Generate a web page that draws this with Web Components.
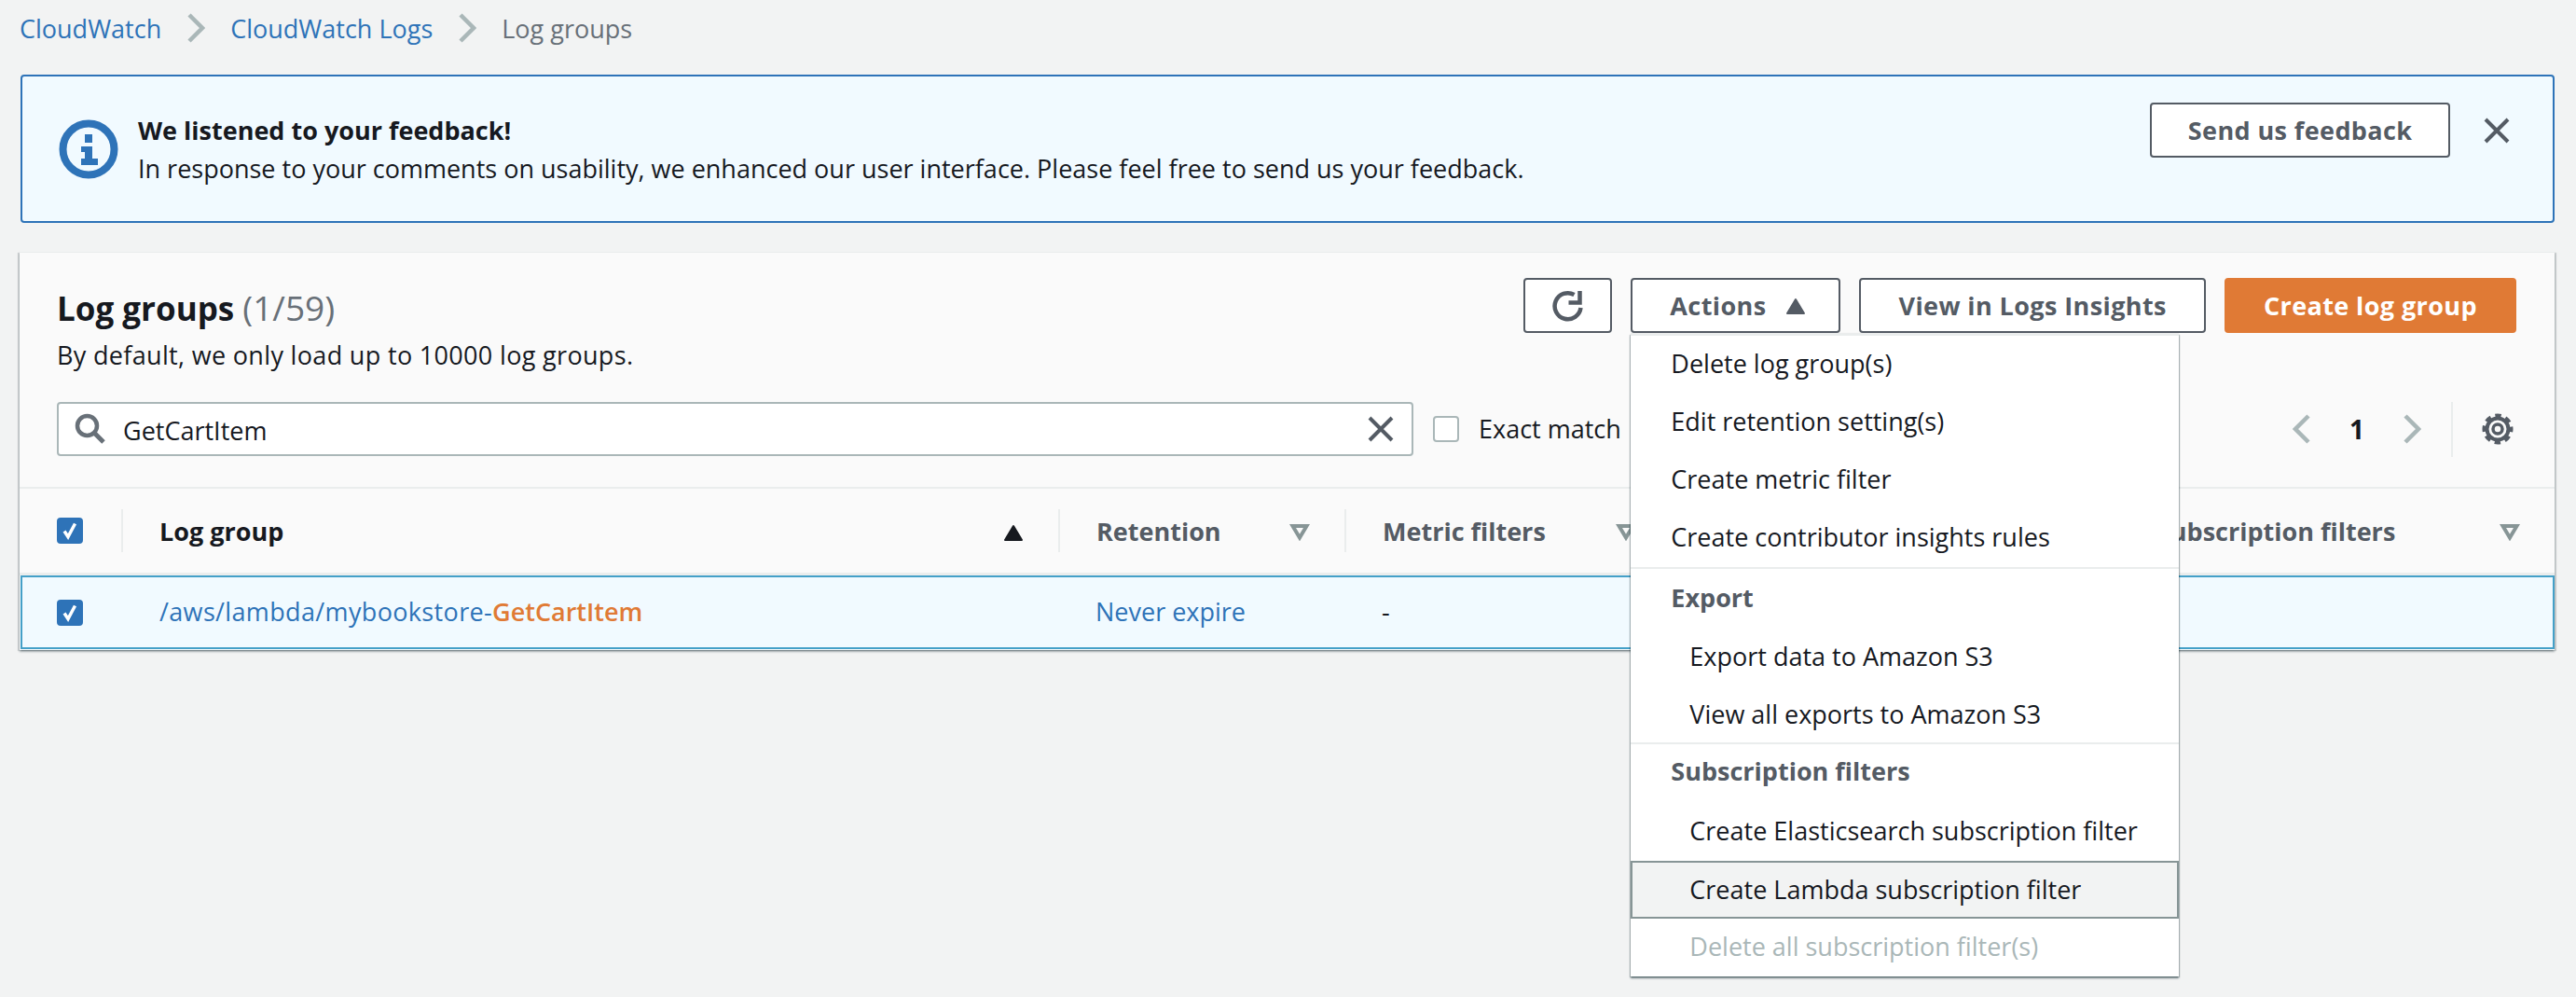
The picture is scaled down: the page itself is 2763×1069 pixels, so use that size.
<!doctype html>
<html lang="en"><head><meta charset="utf-8"><title>Log groups</title>
<style>
html,body{margin:0;background:#f2f3f3}
body{font:400 27px/37px "Open Sans","Noto Sans",sans-serif;color:#16191f}
aws-page{min-height:1069px}
</style></head>
<body>
<aws-page>
  <aws-breadcrumbs></aws-breadcrumbs>
  <aws-flash heading="We listened to your feedback!">In response to your comments on usability, we enhanced our user interface. Please feel free to send us your feedback.
    <aws-button slot="action" style="padding:0 38.5px">Send us feedback</aws-button>
  </aws-flash>
  <aws-log-groups></aws-log-groups>
</aws-page>
<script>
const ICON={
 chev:d=>`<svg width="20" height="32" viewBox="0 0 20 32" fill="none" stroke="currentColor" stroke-width="4.5" stroke-linejoin="miter"><path d="${d==='l'?'M17 2 3 16l14 14':'M3 2l14 14L3 30'}"/></svg>`,
 x:`<svg width="28" height="28" viewBox="0 0 28 28" fill="none" stroke="currentColor" stroke-width="4"><path d="M2 2l24 24M26 2 2 26"/></svg>`,
 info:`<svg width="64" height="64" viewBox="0 0 64 64"><circle cx="32" cy="32" r="27.5" fill="none" stroke="#2e73b8" stroke-width="8"/><path fill="#2e73b8" d="M28 16h8v9h-8zM24 29h12v13h6v7H24v-7h4v-7h-4z"/></svg>`,
 refresh:`<svg width="34" height="34" viewBox="0 0 34 34" fill="none" stroke="currentColor" stroke-width="4.5"><path d="M30.5 19A14 14 0 1 1 23.5 5"/><path d="M29.5 1v12.500H17.500"/></svg>`,
 search:`<svg width="34" height="34" viewBox="0 0 34 34" fill="none" stroke="#687078" stroke-width="4.500"><circle cx="13.500" cy="13.500" r="10.500"/><path d="M21 21l10 10" stroke-width="5"/></svg>`,
 gear:`<svg width="34" height="34" viewBox="0 0 34 34" fill="none" stroke="#545b64"><circle cx="17" cy="17" r="11.500" stroke-width="4"/><circle cx="17" cy="17" r="14.500" stroke-width="4" stroke-dasharray="6.400 5" stroke-dashoffset="3.200"/><circle cx="17" cy="17" r="5" stroke-width="3.500"/></svg>`,
 up:c=>`<svg width="22" height="18" viewBox="0 0 22 18"><path fill="${c}" stroke="${c}" stroke-width="2" stroke-linejoin="round" d="M11 2l9 15H2z"/></svg>`,
 filter:`<svg width="22" height="18" viewBox="0 0 22 18"><path fill="none" stroke="#879596" stroke-width="4" stroke-linejoin="miter" d="M3.500 2h15L11 14.500z"/></svg>`,
 check:`<svg width="18" height="20" viewBox="0 0 18 20" fill="none" stroke="#fff" stroke-width="3.500"><path d="M3 10.500l4 6 7.500-14"/></svg>`
};
function def(name,html){
  customElements.define(name,class extends HTMLElement{
    constructor(){super();this.attachShadow({mode:'open'});if(typeof html!=='function')this.shadowRoot.innerHTML=html;}
    connectedCallback(){if(typeof html==='function')this.shadowRoot.innerHTML=html(this);}
  });
}
def('aws-page',`<style>:host{display:block;padding:0 23px 0 21px;box-sizing:border-box}</style><slot></slot>`);

def('aws-breadcrumbs',`<style>
:host{display:flex;align-items:center;height:60px;margin:0 0 20px 0;color:#687078}
a{color:#2e73b8;text-decoration:none}
i{display:flex;color:#aab7b8;margin:0 27px 0 27px}
</style><a href="#">CloudWatch</a><i>${ICON.chev('r')}</i><a href="#">CloudWatch Logs</a><i>${ICON.chev('r')}</i><span>Log groups</span>`);

def('aws-flash',h=>`<style>
:host{display:flex;align-items:flex-start;box-sizing:border-box;height:159px;margin-left:1px;border:2px solid #2e73b8;border-radius:4px;background:#f1faff;padding:28px 46px 0 39px}
.ic{display:flex;margin-top:18px;margin-right:21px}
.t{flex:1;margin-top:11px}
b{display:block;font-weight:700;margin-bottom:4px}
.x{display:flex;color:#545b64;margin:16px 0 0 36px}
</style><span class="ic">${ICON.info}</span><div class="t"><b>${h.getAttribute('heading')||''}</b><slot></slot></div><slot name="action"></slot><span class="x">${ICON.x}</span>`);

def('aws-button',`<style>
:host{display:inline-flex;align-items:center;justify-content:center;box-sizing:border-box;height:59px;padding:0 40px;border:2px solid #545b64;border-radius:4px;background:#fff;color:#545b64;font-weight:700;letter-spacing:.4px;white-space:nowrap;gap:21px}
:host([primary]){background:#e07a35;border-color:#e07a35;color:#fff}
:host([icon]){padding:0;width:95px}
:host([caret]){padding-right:35px}
</style><slot></slot>`);

def('aws-checkbox',h=>`<style>
:host{display:flex;align-items:center;justify-content:center;box-sizing:border-box;width:28px;height:28px;border-radius:4px;background:#2e73b8;flex:none}
:host([off]){background:#fff;border:2px solid #aab7b8}
</style>${h.hasAttribute('off')?'':ICON.check}`);

def('aws-menu-item',`<style>
:host{display:flex;align-items:center;box-sizing:border-box;height:62px;padding:0 43px 3px;white-space:nowrap}
:host([nested]){padding-left:63px}
:host([heading]){font-weight:700;color:#545b64}
:host([active]){background:#f2f3f3;border:2px solid #879596;padding-left:61px;padding-bottom:1px}
:host([disabled]){color:#aab7b8}
</style><slot></slot>`);

def('aws-menu-group',`<style>
:host{display:block;border-top:2px solid #eaeded}
:host(:first-child){border-top:0}
</style><slot></slot>`);

def('aws-dropdown',`<style>
:host{display:block;position:relative}
.menu{position:absolute;left:0;top:60px;width:588px;box-sizing:border-box;background:#fff;z-index:5;
 box-shadow:0 2px 2px rgba(0,28,36,.45),1px 1px 1px rgba(0,28,36,.2),-1px 1px 1px rgba(0,28,36,.2),0 -1px 1px rgba(0,28,36,.06)}
</style><slot name="trigger"></slot><div class="menu"><slot></slot></div>`);

def('aws-th',h=>`<style>
:host{display:flex;align-items:center;justify-content:space-between;position:relative;box-sizing:border-box;height:90px;padding:0 37px 0 41px;font-weight:700;color:#545b64;white-space:nowrap;min-width:0}
:host([strong]){color:#16191f}
:host::before{content:"";position:absolute;left:0;top:22px;height:46px;width:2px;background:#eaeded}
svg{display:block;flex:none;margin-top:3px}
</style><span><slot></slot></span>${h.hasAttribute('nosort')?'':(h.hasAttribute('strong')?ICON.up('#16191f'):ICON.filter)}`);

def('aws-log-groups',`<style>
:host{display:block;box-sizing:border-box;height:427px;margin-top:31px;background:#fafafa;border-top:1px solid #eaeded;
 box-shadow:0 2px 2px rgba(0,28,36,.3),2px 1px 1px rgba(0,28,36,.15),-2px 1px 1px rgba(0,28,36,.15)}
.head{display:flex;justify-content:space-between;height:160px;padding:27px 41px 0 40px;box-sizing:border-box}
h2{margin:9px 0 0;font-size:35px;line-height:46px;font-weight:700}
h2 span{font-weight:400;font-size:37px;color:#687078}
p{margin:8px 0 0;line-height:37px;letter-spacing:.33px}
.btns{display:flex;gap:20px}
.tools{display:flex;align-items:center;height:58px;padding:0 44px 0 40px;margin-bottom:33px}
.search{display:flex;align-items:center;box-sizing:border-box;width:1455px;height:58px;background:#fff;border:2px solid #aab7b8;border-radius:4px;padding:0 19px 0 17px}
.search .v{flex:1;margin-left:18px;color:#16191f;padding-top:2px}
.search .x{display:flex;color:#545b64}
.exact{display:flex;align-items:center;gap:21px;margin-left:21px;margin-top:-1px}
.pager{display:flex;align-items:center;margin-left:auto;height:59px;color:#aab7b8}
.pager b{color:#16191f;margin:0 41px;font-size:28px}
.sep{width:2px;height:59px;background:#eaeded;margin:0 31px 0 32px}
.gear{display:flex}
.thead,.row{display:grid;grid-template-columns:109px 1005px 307px 350px 480px 1fr;align-items:center}
.row{grid-template-columns:106px 1004px 307px 350px 480px 1fr}
.thead{border-top:2px solid #eaeded;border-bottom:3px solid #eaeded}
.cb{padding-left:40px}
.row{box-sizing:border-box;height:79px;background:#f1faff;border:2px solid #44a0c8;margin-left:1px}
.row .cb{padding-left:37px}
.row .c{padding-left:41px;white-space:nowrap;margin-top:-3px}
.row .c:nth-child(2) a{letter-spacing:.35px}
a{color:#2e73b8;text-decoration:none}
mark{background:none;color:#e07a35;font-weight:600;letter-spacing:0}
</style>
<div class="head">
  <div><h2>Log groups <span>(1/59)</span></h2><p>By default, we only load up to 10000 log groups.</p></div>
  <div class="btns">
    <aws-button icon>${ICON.refresh}</aws-button>
    <aws-dropdown>
      <aws-button slot="trigger" caret>Actions ${ICON.up('#545b64')}</aws-button>
      <aws-menu-group>
        <aws-menu-item>Delete log group(s)</aws-menu-item>
        <aws-menu-item>Edit retention setting(s)</aws-menu-item>
        <aws-menu-item>Create metric filter</aws-menu-item>
        <aws-menu-item>Create contributor insights rules</aws-menu-item>
      </aws-menu-group>
      <aws-menu-group>
        <aws-menu-item heading style="height:64px">Export</aws-menu-item>
        <aws-menu-item nested>Export data to Amazon S3</aws-menu-item>
        <aws-menu-item nested style="height:60px;padding-bottom:1px">View all exports to Amazon S3</aws-menu-item>
      </aws-menu-group>
      <aws-menu-group>
        <aws-menu-item heading style="height:61px;padding-bottom:4px">Subscription filters</aws-menu-item>
        <aws-menu-item nested style="height:64px;padding-bottom:1px">Create Elasticsearch subscription filter</aws-menu-item>
        <aws-menu-item nested active>Create Lambda subscription filter</aws-menu-item>
        <aws-menu-item nested disabled>Delete all subscription filter(s)</aws-menu-item>
      </aws-menu-group>
    </aws-dropdown>
    <aws-button>View in Logs Insights</aws-button>
    <aws-button primary>Create log group</aws-button>
  </div>
</div>
<div class="tools">
  <div class="search">${ICON.search}<span class="v">GetCartItem</span><span class="x">${ICON.x}</span></div>
  <label class="exact"><aws-checkbox off></aws-checkbox>Exact match</label>
  <div class="pager">${ICON.chev('l')}<b>1</b>${ICON.chev('r')}<span class="sep"></span><span class="gear">${ICON.gear}</span></div>
</div>
<div class="thead">
  <div class="cb"><aws-checkbox></aws-checkbox></div>
  <aws-th strong>Log group</aws-th>
  <aws-th>Retention</aws-th>
  <aws-th>Metric filters</aws-th>
  <aws-th nosort></aws-th>
  <aws-th>Subscription filters</aws-th>
</div>
<div class="row">
  <div class="cb"><aws-checkbox></aws-checkbox></div>
  <div class="c"><a href="#">/aws/lambda/mybookstore-<mark>GetCartItem</mark></a></div>
  <div class="c"><a href="#">Never expire</a></div>
  <div class="c">-</div>
</div>`);
</script>
</body></html>
